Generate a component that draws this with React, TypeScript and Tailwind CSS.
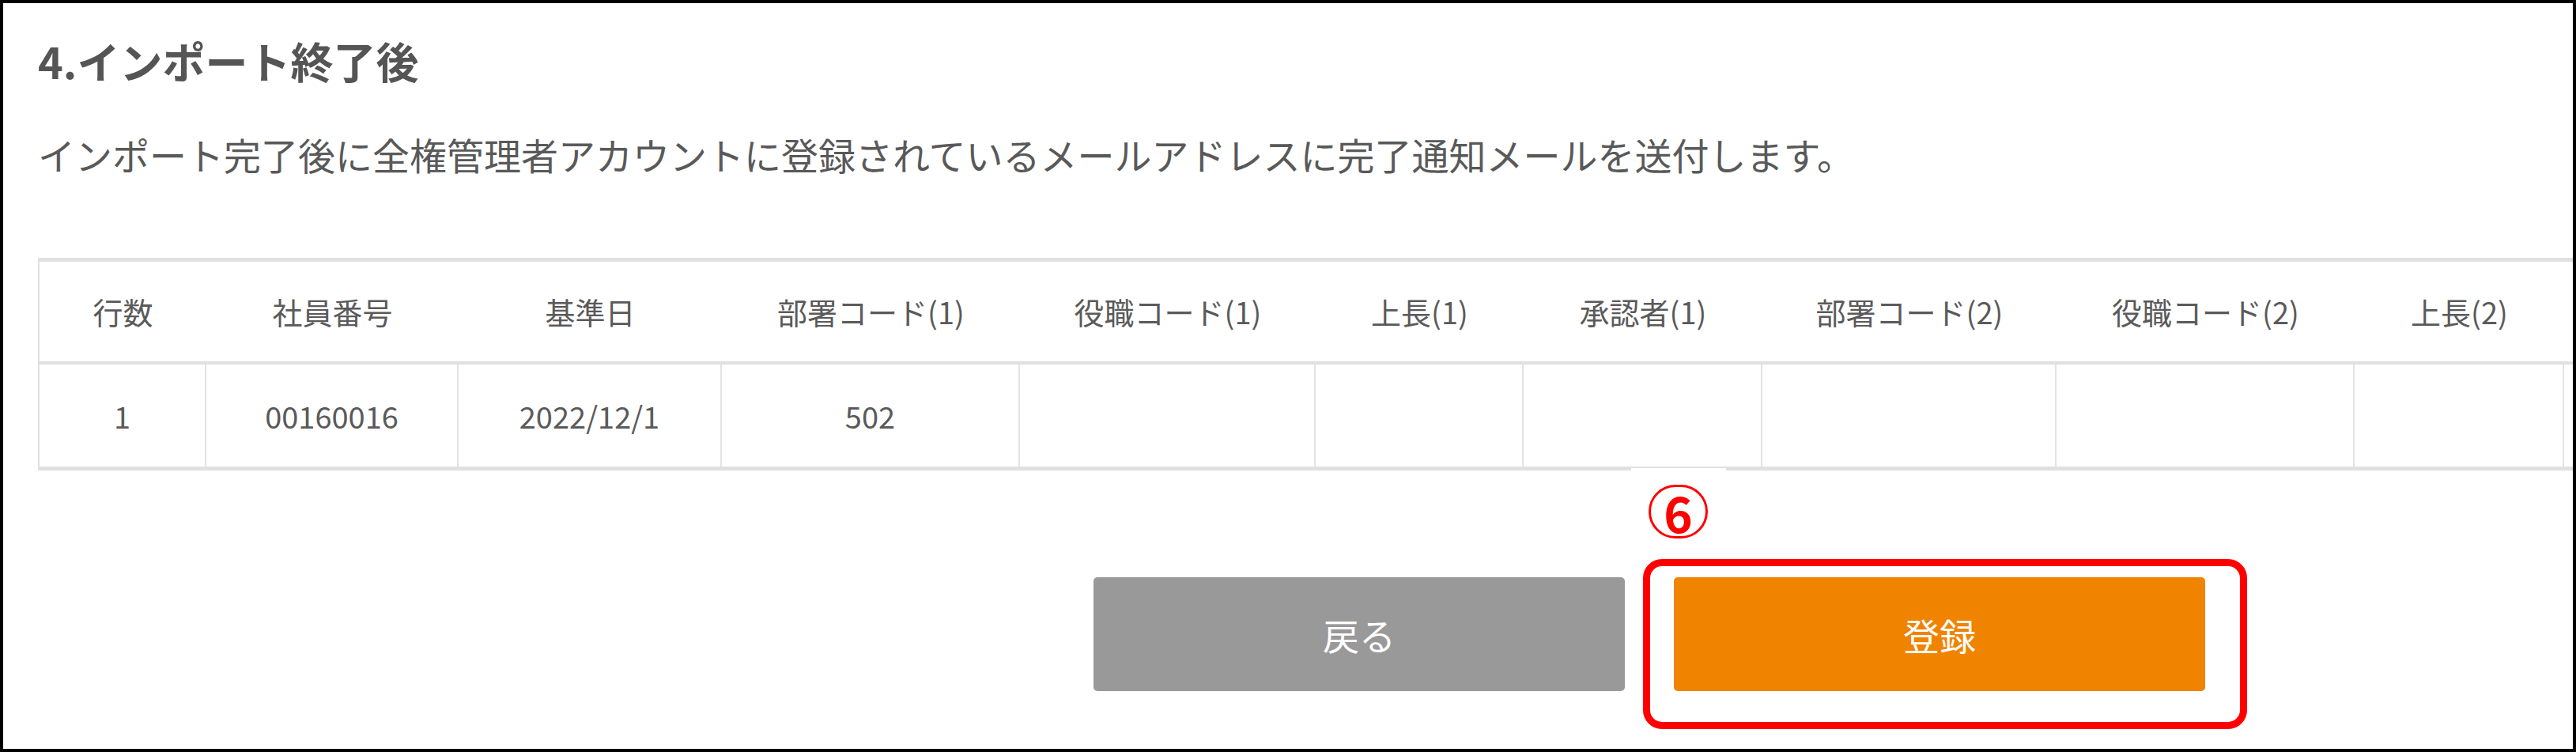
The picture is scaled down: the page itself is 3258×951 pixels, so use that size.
import React from 'react'

// the 11th column runs past the frame edge, so its header is not shown
const headers = [
  '行数',
  '社員番号',
  '基準日',
  '部署コード(1)',
  '役職コード(1)',
  '上長(1)',
  '承認者(1)',
  '部署コード(2)',
  '役職コード(2)',
  '上長(2)',
  '',
]

const row = ['1', '00160016', '2022/12/1', '502', '', '', '', '', '', '', '']

function App() {
  return (
    <div className="relative h-[951px] w-[3258px] overflow-hidden border-4 border-black bg-white pl-[44px] pt-[46px] font-['Noto_Sans_CJK_JP',sans-serif]">
      {/* title */}
      <h1 className="h-[54px] text-[54px] font-bold leading-none text-[#555555]">4.インポート終了後</h1>
      <p className="mt-[67px] h-[47px] text-[47px] leading-none text-[#595959]">
        インポート完了後に全権管理者アカウントに登録されているメールアドレスに完了通知メールを送付します。
      </p>

      {/* import result table */}
      <div className="mt-[108px] w-max border-b-[5px] border-l-2 border-t-[5px] border-[#e0e0e0] text-[38px] leading-none text-[#5a5a5a]">
        <div className="grid h-[130px] grid-cols-[211px_319px_333px_377px_374px_263px_302px_372px_377px_265px_320px] items-center border-b-4 border-[#e0e0e0]">
          {headers.map((h, i) => (
            <div key={i} className="text-center">
              {h}
            </div>
          ))}
        </div>
        <div className="grid h-[129px] grid-cols-[211px_319px_333px_377px_374px_263px_302px_372px_377px_265px_320px]">
          {row.map((v, i) => (
            <div key={i} className="flex items-center justify-center border-r-2 border-[#e3e3e3]">
              {v}
            </div>
          ))}
        </div>
      </div>

      {/* buttons */}
      <div className="ml-[1335px] mt-[135px] flex gap-[62px]">
        <button className="h-[144px] w-[672px] rounded-[5px] bg-[#999999] text-[46px] text-white">戻る</button>
        <button className="h-[144px] w-[672px] rounded-[5px] bg-[#f08300] text-[46px] text-white">登録</button>
      </div>

      {/* annotation ⑥ */}
      <div className="absolute left-[2059px] top-[588px] h-[110px] w-[120px] bg-white" />
      <div className="absolute left-[2081px] top-[609px] flex h-[68px] w-[75px] items-center justify-center rounded-full border-[3px] border-[#ff0000]">
        <span className="text-[62px] font-bold leading-none text-[#ff0000]">6</span>
      </div>
      <div className="absolute left-[2074px] top-[703px] h-[215px] w-[764px] rounded-[24px] border-[9px] border-[#ff0000]" />
    </div>
  )
}

export default App
